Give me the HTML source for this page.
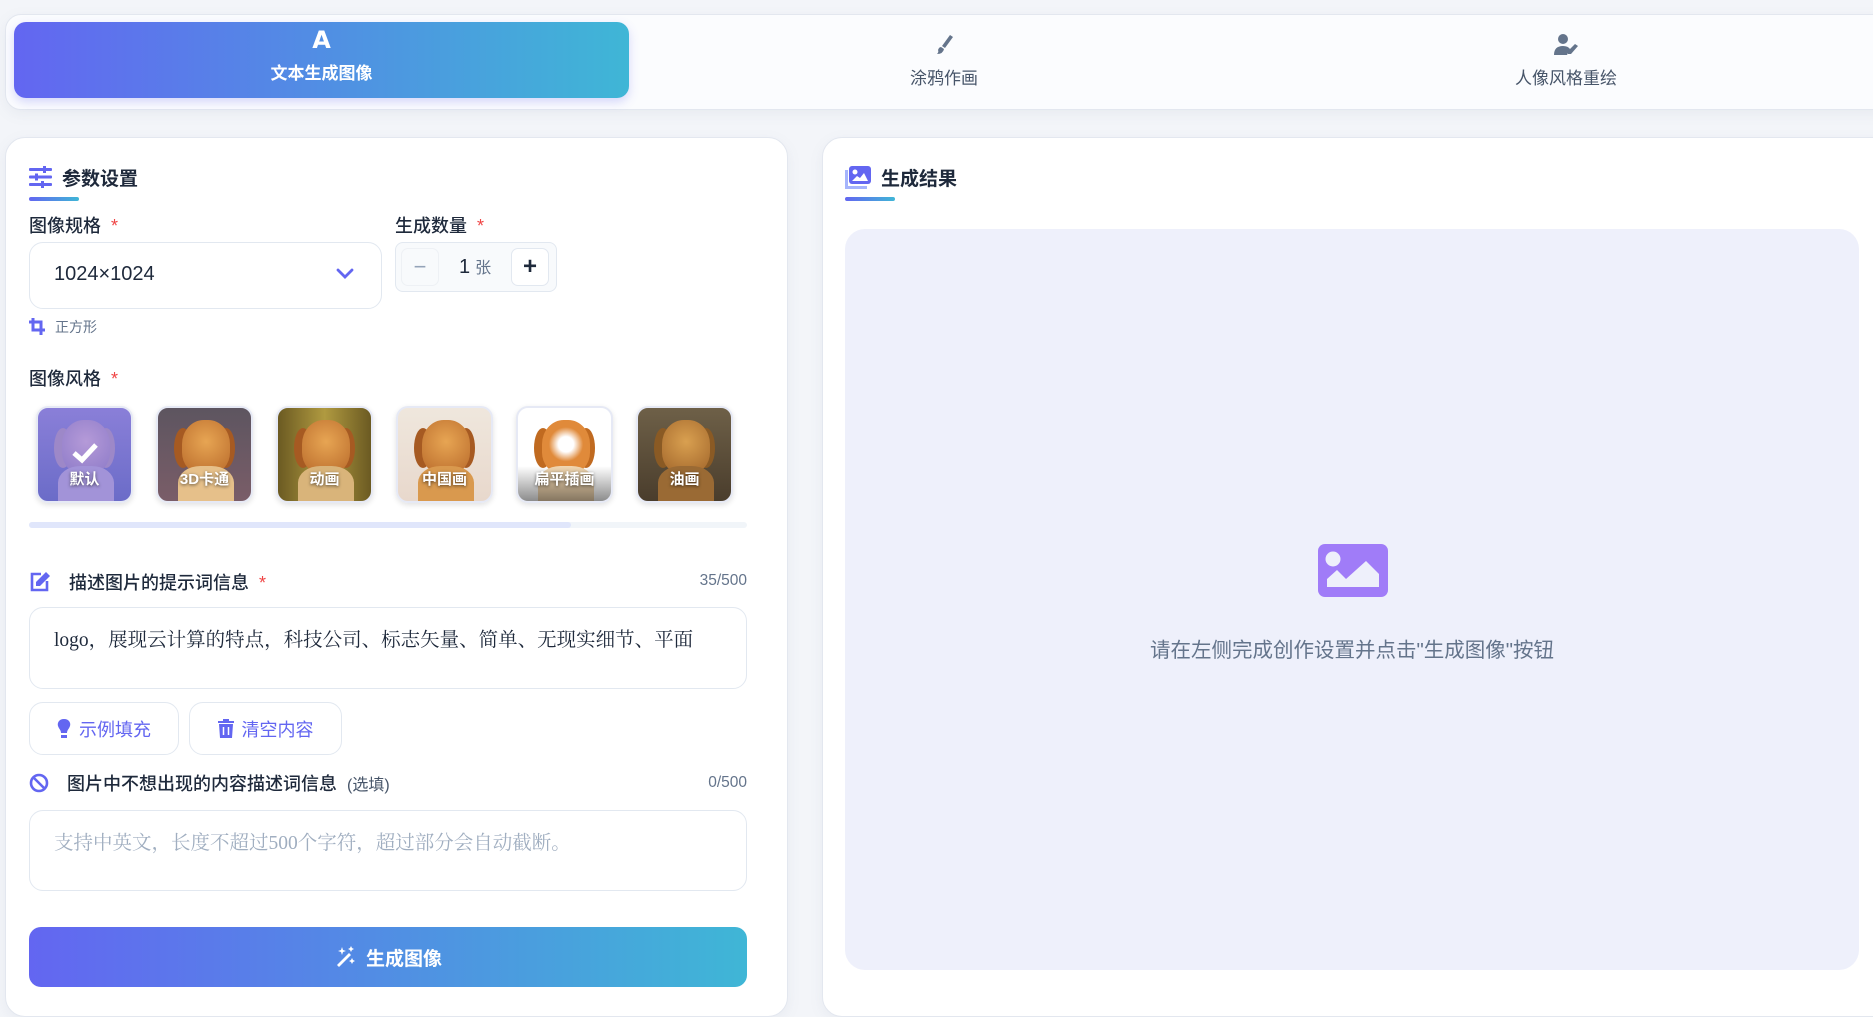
<!DOCTYPE html>
<html><head><meta charset="utf-8"><style>
*{box-sizing:border-box;margin:0;padding:0}
body{width:1873px;height:996px;overflow:hidden;background:#f3f5f9;font-family:"Liberation Sans","Noto Sans CJK SC",sans-serif;position:relative;color:#1e293b}
.abs{position:absolute}
.card{position:absolute;background:#fff;border:1px solid #e3e7ef;box-shadow:0 4px 14px rgba(100,116,139,.08)}
.grad{background:linear-gradient(90deg,#6366f1,#3fb6d6)}
.lbl{position:absolute;font-size:18px;font-weight:500;color:#1e293b}
.req{color:#ef4444;margin-left:10px}
.thumb{position:absolute;top:406px;width:97px;height:97px;border-radius:12px;overflow:hidden;border:2px solid #e6e9f5;box-shadow:0 2px 6px rgba(0,0,0,.12)}
.thumb span{position:absolute;left:0;right:0;top:60px;text-align:center;color:#fff;font-weight:700;font-size:15px;text-shadow:0 1px 3px rgba(0,0,0,.6)}
.dog{position:absolute;left:24px;top:12px;width:48px;height:54px;border-radius:45% 45% 40% 40%;background:radial-gradient(circle at 50% 40%,#e7a553,#b8692a)}
.ear1,.ear2{position:absolute;top:20px;width:18px;height:40px;border-radius:50%;background:#a65a22}
.ear1{left:16px}.ear2{right:16px}
.body{position:absolute;left:20px;top:58px;width:56px;height:42px;border-radius:40% 40% 0 0;background:#d9994e}
.ta{position:absolute;border:1px solid #e2e8f0;border-radius:14px;background:#fff;font-family:"Liberation Serif","Noto Serif CJK SC",serif;font-size:19.5px}
.btn{position:absolute;border:1px solid #e2e8f0;border-radius:14px;background:#fff;color:#6366f1;font-size:18px;display:flex;align-items:center;justify-content:center;gap:8px}
.cnt{position:absolute;width:100px;text-align:right;font-size:15.5px;color:#64748b}
</style></head><body>

<div class="card" style="left:5px;top:14px;width:1890px;height:96px;border-radius:16px;background:#fbfcfe"></div>
<div class="abs grad" style="left:14px;top:22px;width:615px;height:76px;border-radius:12px;box-shadow:0 4px 10px rgba(99,102,241,.25)"></div>
<div class="abs" style="left:14px;top:26px;width:615px;text-align:center;color:#fff;font-weight:700;font-size:24px;font-family:'DejaVu Sans',sans-serif">A</div>
<div class="abs" style="left:14px;top:59px;width:615px;text-align:center;color:#fff;font-weight:700;font-size:17px">文本生成图像</div>
<svg class="abs" style="left:932px;top:33px" width="24" height="24" viewBox="0 0 24 24"><path d="M18 2 L21 4 L13 15 L10 13 Z" fill="#64748b"/><path d="M9 14 L12 16 Q11 21 5 21 Q7 19 6 17 Q7 14 9 14Z" fill="#64748b"/></svg>
<div class="abs" style="left:637px;top:64px;width:614px;text-align:center;color:#475569;font-size:17px">涂鸦作画</div>
<svg class="abs" style="left:1553px;top:33px" width="28" height="24" viewBox="0 0 28 24"><circle cx="10" cy="6" r="5" fill="#64748b"/><path d="M1 22 Q1 13 10 13 Q15 13 17 16 L14 22Z" fill="#64748b"/><path d="M22 11 L25 13 L18 21 L15 21 L15 18Z" fill="#64748b"/></svg>
<div class="abs" style="left:1259px;top:64px;width:614px;text-align:center;color:#475569;font-size:17px">人像风格重绘</div>

<div class="card" style="left:5px;top:137px;width:783px;height:880px;border-radius:20px"></div>
<svg class="abs" style="left:29px;top:166px" width="23" height="22" viewBox="0 0 23 22"><g fill="#6366f1"><rect x="0" y="2" width="23" height="3" rx="1"/><rect x="0" y="9.5" width="23" height="3" rx="1"/><rect x="0" y="17" width="23" height="3" rx="1"/><rect x="14" y="0" width="3" height="7"/><rect x="6" y="7.5" width="3" height="7"/><rect x="12" y="15" width="3" height="7"/></g></svg>
<div class="abs" style="left:62px;top:164px;font-size:19px;font-weight:700">参数设置</div>
<div class="abs grad" style="left:29px;top:197px;width:50px;height:4px;border-radius:2px"></div>

<div class="lbl" style="left:29px;top:212px">图像规格<span class="req">*</span></div>
<div class="abs" style="left:29px;top:242px;width:353px;height:67px;border:1px solid #e2e8f0;border-radius:14px;background:#fff"></div>
<div class="abs" style="left:54px;top:263px;font-size:20px;color:#1e293b">1024×1024</div>
<svg class="abs" style="left:336px;top:268px" width="18" height="12" viewBox="0 0 18 12"><path d="M2 2 L9 9 L16 2" stroke="#6366f1" stroke-width="2.8" fill="none" stroke-linecap="round"/></svg>

<div class="lbl" style="left:395px;top:212px">生成数量<span class="req">*</span></div>
<div class="abs" style="left:395px;top:242px;width:162px;height:50px;border:1px solid #e2e8f0;border-radius:8px;background:#f8fafc"></div>
<div class="abs" style="left:401px;top:248px;width:38px;height:38px;border:1px solid #eef1f5;border-radius:7px;background:#f8fafc;color:#94a3b8;font-size:22px;text-align:center;line-height:36px">−</div>
<div class="abs" style="left:459px;top:254px;font-size:20px;color:#1e293b">1<span style="font-size:16px;color:#64748b;margin-left:5px">张</span></div>
<div class="abs" style="left:511px;top:248px;width:38px;height:38px;border:1px solid #e2e8f0;border-radius:7px;background:#fff;color:#1e293b;font-size:24px;font-weight:700;text-align:center;line-height:36px">+</div>

<svg class="abs" style="left:29px;top:318px" width="16" height="17" viewBox="0 0 16 17"><path d="M4 0 V12 H16 M0 4 H12 V17" stroke="#6366f1" stroke-width="3" fill="none"/></svg>
<div class="abs" style="left:55px;top:317px;font-size:14px;color:#64748b">正方形</div>

<div class="lbl" style="left:29px;top:365px">图像风格<span class="req">*</span></div>

<div class="thumb" style="left:36px;background:linear-gradient(#8a7fd8,#6b6cc8)"><div class="ear1" style="background:#9d88c8"></div><div class="ear2" style="background:#9d88c8"></div><div class="dog" style="background:radial-gradient(circle at 50% 40%,#b59ad8,#8c7ac8)"></div><div class="body" style="background:#a293d8"></div>
<svg class="abs" style="left:33px;top:34px" width="28" height="22" viewBox="0 0 28 22"><path d="M3 11 L11 18 L25 3" stroke="#fff" stroke-width="5" fill="none"/></svg><span>默认</span></div>
<div class="thumb" style="left:156px;background:linear-gradient(#5d5560,#7a5d68)"><div class="ear1"></div><div class="ear2"></div><div class="dog"></div><div class="body" style="background:#e6c08a"></div><span>3D卡通</span></div>
<div class="thumb" style="left:276px;background:linear-gradient(90deg,#6b5a22,#b09a40,#6b5a22)"><div class="ear1"></div><div class="ear2"></div><div class="dog"></div><div class="body" style="background:#d9b47a"></div><span>动画</span></div>
<div class="thumb" style="left:396px;background:linear-gradient(#efe7dd,#e8d8cc)"><div class="ear1"></div><div class="ear2"></div><div class="dog"></div><div class="body"></div><span>中国画</span></div>
<div class="thumb" style="left:516px;background:#fff"><div class="ear1" style="background:#c06a20"></div><div class="ear2" style="background:#c06a20"></div><div class="dog" style="background:radial-gradient(circle at 50% 45%,#fff 20%,#e08a3a 45%)"></div><div class="body" style="background:#f2d7b0"></div><div class="abs" style="left:0;right:0;bottom:0;height:35px;background:linear-gradient(transparent,rgba(0,0,0,.45))"></div><span>扁平插画</span></div>
<div class="thumb" style="left:636px;background:linear-gradient(#6e6048,#4a3d2c)"><div class="ear1" style="background:#8a5a24"></div><div class="ear2" style="background:#8a5a24"></div><div class="dog" style="background:radial-gradient(circle at 50% 40%,#d9a050,#a0642a)"></div><div class="body" style="background:#9a6a34"></div><span>油画</span></div>

<div class="abs" style="left:29px;top:522px;width:718px;height:6px;border-radius:3px;background:#f1f5f9"></div>
<div class="abs" style="left:29px;top:522px;width:542px;height:6px;border-radius:3px;background:#e0e6fb"></div>

<svg class="abs" style="left:29px;top:571px" width="22" height="22" viewBox="0 0 22 22"><path d="M12 3 H3 V19 H18 V10" stroke="#6366f1" stroke-width="2.6" fill="none"/><path d="M17 1 L21 5 L11 15 L7 15 L7 11Z" fill="#6366f1"/></svg>
<div class="lbl" style="left:69px;top:569px">描述图片的提示词信息<span class="req">*</span></div>
<div class="cnt" style="left:647px;top:572px">35/500</div>
<div class="ta" style="left:29px;top:607px;width:718px;height:82px;padding:16px 24px;color:#1e293b">logo，展现云计算的特点，科技公司、标志矢量、简单、无现实细节、平面</div>

<div class="btn" style="left:29px;top:702px;width:150px;height:53px"><svg width="14" height="20" viewBox="0 0 14 20"><path d="M7 0 C2 0 0 4 1 7 C2 10 4 11 4 14 H10 C10 11 12 10 13 7 C14 4 12 0 7 0Z M4 16 H10 V19 H4Z" fill="#6366f1"/></svg>示例填充</div>
<div class="btn" style="left:189px;top:702px;width:153px;height:53px"><svg width="16" height="19" viewBox="0 0 16 19"><path d="M0 2 H5 V0 H11 V2 H16 V4 H0Z M1 5 H15 L14 19 H2Z" fill="#6366f1"/><path d="M5.5 8 V16 M10.5 8 V16" stroke="#fff" stroke-width="1.5"/></svg>清空内容</div>

<svg class="abs" style="left:29px;top:773px" width="20" height="20" viewBox="0 0 20 20"><circle cx="10" cy="10" r="8" stroke="#6366f1" stroke-width="2.6" fill="none"/><path d="M4 4 L16 16" stroke="#6366f1" stroke-width="2.6"/></svg>
<div class="lbl" style="left:67px;top:770px">图片中不想出现的内容描述词信息<span style="font-size:16px;color:#475569;margin-left:10px;font-weight:400">(选填)</span></div>
<div class="cnt" style="left:647px;top:774px">0/500</div>
<div class="ta" style="left:29px;top:810px;width:718px;height:81px;padding:16px 24px;color:#a0aec0">支持中英文，长度不超过500个字符，超过部分会自动截断。</div>

<div class="abs grad" style="left:29px;top:927px;width:718px;height:60px;border-radius:12px;color:#fff;font-size:19px;font-weight:700;display:flex;align-items:center;justify-content:center;gap:10px"><svg width="22" height="22" viewBox="0 0 22 22"><path d="M3 19 L15 7 L17 9 L5 21Z" fill="#fff"/><path d="M8 1 L9 4 L12 5 L9 6 L8 9 L7 6 L4 5 L7 4Z M17 0 L18 2 L20 3 L18 4 L17 6 L16 4 L14 3 L16 2Z M18 12 L19 14 L21 15 L19 16 L18 18 L17 16 L15 15 L17 14Z" fill="#fff"/></svg>生成图像</div>

<div class="card" style="left:822px;top:137px;width:1080px;height:880px;border-radius:20px"></div>
<svg class="abs" style="left:845px;top:166px" width="26" height="23" viewBox="0 0 26 23"><rect x="4" y="0" width="22" height="18" rx="3" fill="#6366f1"/><rect x="0" y="4" width="3" height="19" fill="#a5b4fc"/><rect x="0" y="20" width="22" height="3" fill="#a5b4fc"/><circle cx="10" cy="6" r="2.5" fill="#fff"/><path d="M7 15 L12 10 L15 12 L19 7 L23 15Z" fill="#fff"/></svg>
<div class="abs" style="left:881px;top:164px;font-size:19px;font-weight:700">生成结果</div>
<div class="abs grad" style="left:845px;top:197px;width:50px;height:4px;border-radius:2px"></div>

<div class="abs" style="left:845px;top:229px;width:1014px;height:741px;border-radius:20px;background:#eef0fb"></div>
<svg class="abs" style="left:1318px;top:544px" width="70" height="53" viewBox="0 0 70 53"><rect width="70" height="53" rx="7" fill="#a07cf8"/><circle cx="15" cy="15" r="7.5" fill="#eef0fb"/><path d="M9 43 V35 L19 26 L28 35 L48 17 L61 30 V43Z" fill="#eef0fb"/></svg>
<div class="abs" style="left:845px;top:633px;width:1014px;text-align:center;font-size:20.5px;color:#64748b">请在左侧完成创作设置并点击"生成图像"按钮</div>
</body></html>
